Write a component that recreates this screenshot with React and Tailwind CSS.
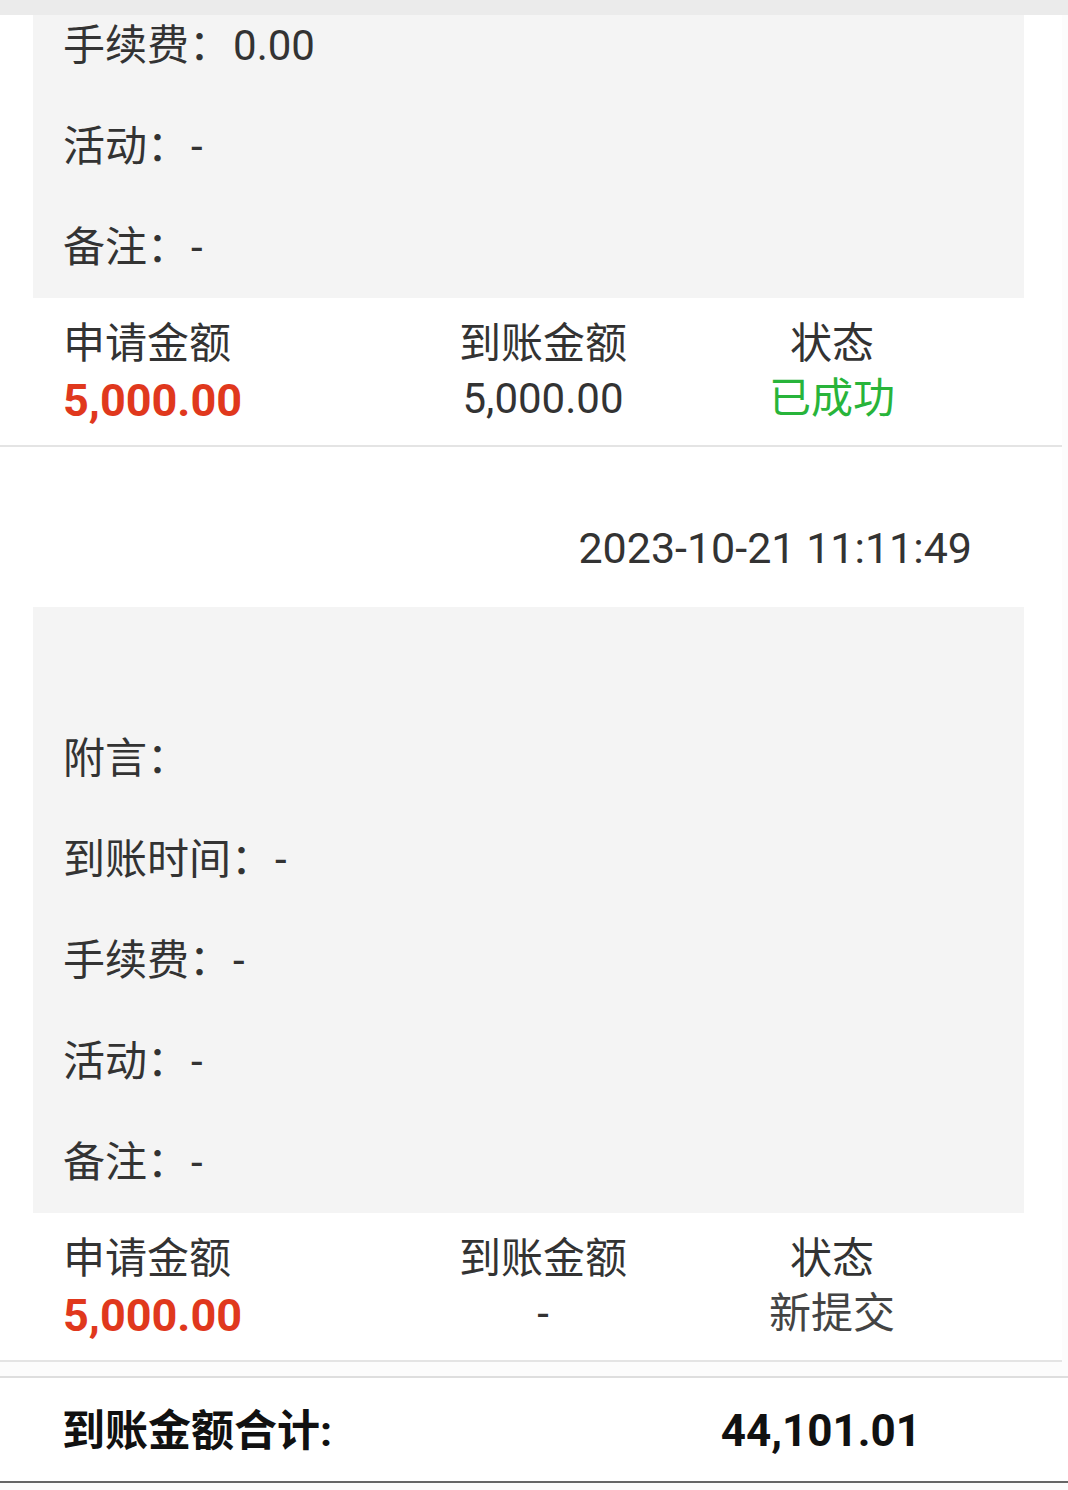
import React from "react";

const font = { fontFamily: 'Roboto, "Noto Sans CJK SC", sans-serif' };

function InfoRow({ label, value }) {
  return (
    <div className="h-[101px] flex items-center pl-[30px] text-[42px] text-[#333] leading-none">
      {label && (
        <span>
          {label}：{value && <span className="ml-[2px]">{value}</span>}
        </span>
      )}
    </div>
  );
}

function Summary({ applied, received, status, statusClass }) {
  return (
    <div className="pl-[63px] pt-[25px] pb-[23px] grid grid-cols-[300px_360px_218px] leading-none">
      <div className="flex flex-col gap-[11px]">
        <span className="text-[42px] text-[#333] h-[44px]">申请金额</span>
        <span className="text-[45px] font-bold text-[#e0381d] h-[44px]">{applied}</span>
      </div>
      <div className="flex flex-col items-center gap-[11px]">
        <span className="text-[42px] text-[#333] h-[44px]">到账金额</span>
        <span className="text-[42px] text-[#333] h-[44px]">{received}</span>
      </div>
      <div className="flex flex-col items-center gap-[11px]">
        <span className="text-[42px] text-[#333] h-[44px]">状态</span>
        <span className={"text-[42px] h-[44px] " + statusClass}>{status}</span>
      </div>
    </div>
  );
}

export default function App() {
  return (
    <div className="w-[1068px] h-[1490px] bg-[#fcfcfc] overflow-hidden relative" style={font}>
      <div className="absolute top-0 left-0 right-0 h-[15px] bg-[#ebebeb] z-10" />

      <div className="w-[1062px] bg-white border-b-2 border-[#e4e4e4]">
        <div className="ml-[33px] mr-[38px] bg-[#f4f4f4] -mt-[5px]">
          <InfoRow label="手续费" value="0.00" />
          <InfoRow label="活动" value="-" />
          <InfoRow label="备注" value="-" />
        </div>
        <Summary
          applied="5,000.00"
          received="5,000.00"
          status="已成功"
          statusClass="text-[#28b43a]"
        />
      </div>

      <div className="w-[1062px] bg-white border-b-2 border-[#e4e4e4]">
        <div className="h-[160px] flex items-center justify-end pr-[98px] text-[43px] text-[#333] leading-none pt-[42px]">
          <span className="-mr-[8px]">2023-10-21 11:11:49</span>
        </div>
        <div className="ml-[33px] mr-[38px] bg-[#f4f4f4]">
          <InfoRow label="" />
          <InfoRow label="附言" />
          <InfoRow label="到账时间" value="-" />
          <InfoRow label="手续费" value="-" />
          <InfoRow label="活动" value="-" />
          <InfoRow label="备注" value="-" />
        </div>
        <Summary
          applied="5,000.00"
          received="-"
          status="新提交"
          statusClass="text-[#444]"
        />
      </div>

      <div className="mt-[14px] border-t-2 border-[#dedede] bg-white h-[107px] flex items-center justify-between pl-[62px] pr-[147px] pt-[3px] border-b-2 border-b-[#666]">
        <span className="text-[43px] font-bold text-[#111] leading-none">到账金额合计:</span>
        <span className="text-[44px] font-bold text-[#111] leading-none">44,101.01</span>
      </div>
    </div>
  );
}
